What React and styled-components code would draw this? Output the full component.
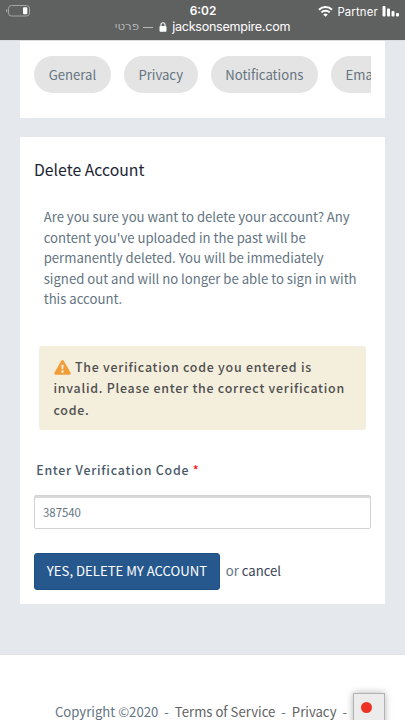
import styled, { createGlobalStyle } from "styled-components";

const GlobalStyle = createGlobalStyle`
  * {
    box-sizing: border-box;
  }

  body {
    margin: 0;
    background-color: #e5e9ee;
    font-family: "Noto Sans CJK SC", "Open Sans", sans-serif;
    font-size: 13.15px;
    color: #647481;
  }
`;

const Page = styled.div`
  height: 720px;
  overflow: hidden;
  display: flex;
  flex-direction: column;
`;

const BrowserBar = styled.header`
  flex: none;
  height: 41px;
  padding-top: 3px;
  background-color: #5f6060;
  border-bottom: 1px solid #dcdddf;
  color: #fff;
  font-family: Inter, "DejaVu Sans", sans-serif;
`;

const Status = styled.div`
  height: 15px;
  display: grid;
  grid-template-columns: 1fr auto 1fr;
  align-items: center;
  padding: 0 5px 0 6px;
`;

const Time = styled.span`
  padding-bottom: 2px;
  font-size: 11.9px;
  font-weight: 600;
  line-height: 15px;
`;

const Carrier = styled.div`
  display: flex;
  align-items: center;
  justify-content: flex-end;
  gap: 4px;
  font-size: 11.3px;
  letter-spacing: 0.2px;
  line-height: 14px;
`;

const Address = styled.div`
  display: flex;
  align-items: center;
  justify-content: center;
  height: 17px;
  font-size: 12.6px;
  letter-spacing: -0.27px;
  line-height: 17px;
`;

const Private = styled.span`
  color: #b5b6b6;
  font-family: "DejaVu Sans", sans-serif;
  font-size: 11.8px;
  letter-spacing: 0;
`;

const Dash = styled.span`
  width: 10px;
  height: 1px;
  margin: 2px 6px 0 4px;
  background-color: #b5b6b6;
`;

const Lock = styled.svg`
  margin-right: 5px;
`;

const Card = styled.section`
  flex: none;
  width: 365px;
  height: ${(props) => props.$height}px;
  margin: 0 0 ${(props) => props.$gap}px 20px;
  padding: ${(props) => props.$top}px 14.4px 0 14px;
  background-color: #fff;
`;

const Tabs = styled.nav`
  display: flex;
  gap: 12.8px;
  overflow: hidden;
`;

const Tab = styled.a`
  flex: none;
  height: 37px;
  padding: 0 14.7px;
  border-radius: 19px;
  background-color: #e4e4e4;
  line-height: 37px;
`;

const Title = styled.h1`
  margin: 0;
  color: #1c2536;
  font-size: 15.8px;
  font-weight: 400;
  line-height: 24px;
`;

const Text = styled.p`
  margin: 25px 0 0 9.7px;
  line-height: 20.6px;
  white-space: nowrap;
`;

const Alert = styled.div`
  height: 84px;
  margin: 36px 5px 0;
  padding: 11px 0 0 14.5px;
  border-radius: 3px;
  background-color: #f4eedc;
  color: #4f4f4f;
  font-size: 12.4px;
  font-weight: 500;
  letter-spacing: 0.76px;
  line-height: 21.4px;
  white-space: nowrap;
`;

const WarningIcon = styled.svg`
  margin-right: 4.5px;
  vertical-align: -3px;
`;

const Label = styled.label`
  display: block;
  margin: 30px 0 0 2.2px;
  color: #4a5a69;
  font-size: 12.4px;
  font-weight: 500;
  letter-spacing: 0.76px;
  line-height: 20px;
`;

const Required = styled.span`
  color: #f3201c;
`;

const Input = styled.input`
  display: block;
  width: 337px;
  height: 34px;
  margin-top: 15px;
  padding: 0 8px;
  border: 1px solid #d3d3d3;
  border-radius: 2px;
  box-shadow: inset 0 2px 0 #d9d9d9;
  background-color: #fff;
  color: #647481;
  font-family: inherit;
  font-size: 11.4px;
  outline: 0;
`;

const Actions = styled.div`
  display: flex;
  align-items: center;
  margin-top: 24px;
  line-height: 18px;
  white-space: pre;
`;

const Button = styled.button`
  width: 186px;
  height: 37px;
  margin-right: 5.7px;
  padding: 0;
  border: 1px solid #1c4f86;
  border-radius: 3px;
  background-color: #26588d;
  color: #fff;
  font-family: inherit;
  font-size: 13.15px;
  line-height: 34px;
`;

const Cancel = styled.a`
  color: #3b4455;
`;

const Footer = styled.footer`
  flex: 1;
  position: relative;
  padding: 48px 0 0 54.9px;
  border-top: 1px solid #e0e3e6;
  background-color: #fff;
  line-height: 18px;
  white-space: nowrap;
`;

const FooterLink = styled.a`
  color: #626262;
`;

const Separator = styled.span`
  margin: 0 6px;
`;

const Recorder = styled.div`
  position: absolute;
  left: 353px;
  top: 38px;
  width: 32px;
  height: 40px;
  padding: 8px 0 0 7px;
  border: 1px solid #b3b3b3;
  background-color: #ececec;
  box-shadow: 0 0 7px rgba(0, 0, 0, 0.3);
`;

const Dot = styled.div`
  width: 11px;
  height: 11px;
  border-radius: 50%;
  background-color: #ec3323;
`;

const Battery = () => (
  <svg width="25" height="13" viewBox="0 0 25 13">
    <rect x="2.5" y="0.5" width="21" height="10.5" rx="3" fill="none" stroke="#a5a5a5" />
    <path d="M1.3 3.9v3.8C.4 7.4 0 6.6 0 5.8s.4-1.6 1.3-1.9z" fill="#a5a5a5" />
    <rect x="17" y="2.3" width="4.3" height="7" rx="1" fill="#fff" />
  </svg>
);

const Wifi = () => (
  <svg width="15" height="12" viewBox="0 0 15 12" fill="none" stroke="#fff" strokeWidth="2">
    <path d="M1 3.7a9.2 9.2 0 0 1 13 0M3.4 6.4a5.8 5.8 0 0 1 8.2 0" />
    <path d="M7.5 10.8 5.2 8.5a3.3 3.3 0 0 1 4.6 0z" fill="#fff" stroke="none" />
  </svg>
);

const Signal = () => (
  <svg width="18" height="12" viewBox="0 0 18 12" fill="#fff">
    <rect x="0.5" y="0" width="3" height="10.5" rx="1" />
    <rect x="5" y="2.5" width="3" height="8" rx="1" />
    <rect x="9.5" y="5" width="3" height="5.5" rx="1" />
    <rect x="14" y="7" width="3" height="3.5" rx="1" />
  </svg>
);

const App = () => {
  return (
    <Page>
      <GlobalStyle />
      <BrowserBar>
        <Status>
          <Battery />
          <Time>6:02</Time>
          <Carrier>
            <Wifi />
            Partner
            <Signal />
          </Carrier>
        </Status>
        <Address>
          <Private>פרטי</Private>
          <Dash />
          <Lock width="8" height="10" viewBox="0 0 8 10">
            <rect x="0.5" y="4" width="7" height="5.7" rx="1" fill="#fff" />
            <path d="M2 4.5V2.8a2 2 0 0 1 4 0v1.7" fill="none" stroke="#fff" strokeWidth="1.1" />
          </Lock>
          jacksonsempire.com
        </Address>
      </BrowserBar>
      <Card $height={77} $gap={19} $top={15}>
        <Tabs>
          <Tab>General</Tab>
          <Tab>Privacy</Tab>
          <Tab>Notifications</Tab>
          <Tab>Email</Tab>
        </Tabs>
      </Card>
      <Card $height={467} $gap={50} $top={21}>
        <Title>Delete Account</Title>
        <Text>
          Are you sure you want to delete your account? Any
          <br />
          content you've uploaded in the past will be
          <br />
          permanently deleted. You will be immediately
          <br />
          signed out and will no longer be able to sign in with
          <br />
          this account.
        </Text>
        <Alert>
          <WarningIcon width="17" height="15" viewBox="0 0 17 15">
            <path
              d="M7.3.8a1.4 1.4 0 0 1 2.4 0l6.8 11.8a1.4 1.4 0 0 1-1.2 2.1H1.7a1.4 1.4 0 0 1-1.2-2.1z"
              fill="#f29c38"
            />
            <path d="M7.3 4.8h2.4l-.4 4.5H7.7z" fill="#f4eedc" />
            <circle cx="8.5" cy="11.6" r="1.3" fill="#f4eedc" />
          </WarningIcon>
          The verification code you entered is
          <br />
          invalid. Please enter the correct verification
          <br />
          code.
        </Alert>
        <Label htmlFor="code">
          Enter Verification Code <Required>*</Required>
        </Label>
        <Input id="code" defaultValue="387540" />
        <Actions>
          <Button>YES, DELETE MY ACCOUNT</Button>
          or <Cancel>cancel</Cancel>
        </Actions>
      </Card>
      <Footer>
        Copyright ©2020
        <Separator>-</Separator>
        <FooterLink>Terms of Service</FooterLink>
        <Separator>-</Separator>
        <FooterLink>Privacy</FooterLink>
        <Separator>-</Separator>
        <Recorder>
          <Dot />
        </Recorder>
      </Footer>
    </Page>
  );
};

export default App;
